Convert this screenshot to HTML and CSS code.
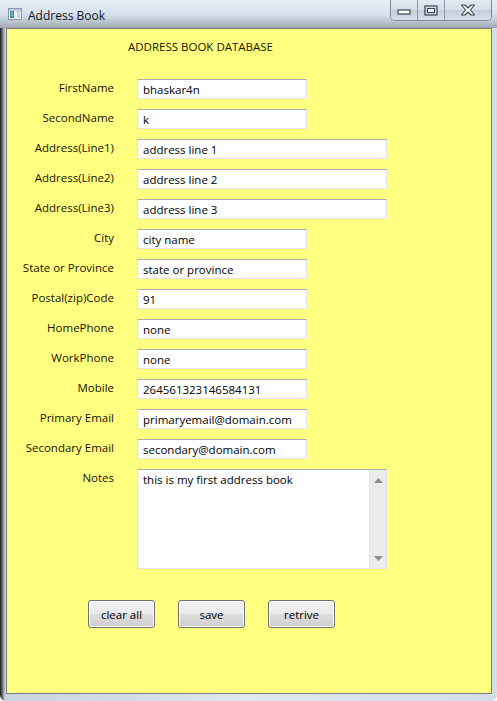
FILE: index.html
```html
<!DOCTYPE html>
<html>
<head>
<meta charset="utf-8">
<link rel="stylesheet" href="styles.css">
</head>
<body>
<div class="window">
  <div class="titlebar">
    <div class="app-icon">
      <svg width="14" height="12" viewBox="0 0 14 12">
        <rect x="0.5" y="0.5" width="13" height="11" fill="#eef2f6" stroke="#8a97a6"/>
        <rect x="1" y="1" width="12" height="2" fill="#b9c9dc"/>
        <rect x="2" y="3" width="4" height="7" fill="#3f8f8a"/>
        <rect x="3" y="4" width="2" height="4" fill="#6fb4d6"/>
        <rect x="9" y="3" width="3" height="7" fill="#c7d3df"/>
      </svg>
    </div>
    <div class="title">Address Book</div>
    <div class="controls">
      <div class="ctl min">
        <svg width="14" height="6" viewBox="0 0 14 6"><rect x="1" y="1" width="12" height="4" fill="#fff" stroke="#3b4352" stroke-width="1.2"/></svg>
      </div>
      <div class="ctl max">
        <svg width="14" height="11" viewBox="0 0 14 11"><rect x="1" y="1" width="12" height="9" fill="none" stroke="#3b4352" stroke-width="1.2"/><rect x="3.5" y="3.5" width="7" height="4" fill="#fff" stroke="#3b4352" stroke-width="1"/></svg>
      </div>
      <div class="ctl close">
        <svg width="16" height="12" viewBox="0 0 16 12"><path d="M1.5 1 H5 L8 4 L11 1 H14.5 L10.5 6 L14.5 11 H11 L8 8 L5 11 H1.5 L5.5 6 Z" fill="#fff" stroke="#3b4352" stroke-width="1.1" stroke-linejoin="round"/></svg>
      </div>
    </div>
  </div>
  <div class="content">
    <div class="heading">ADDRESS BOOK DATABASE</div>
    <div class="form">
      <div class="label">FirstName</div><input class="field short" value="bhaskar4n" readonly>
      <div class="label">SecondName</div><input class="field short" value="k" readonly>
      <div class="label">Address(Line1)</div><input class="field long" value="address line 1" readonly>
      <div class="label">Address(Line2)</div><input class="field long" value="address line 2" readonly>
      <div class="label">Address(Line3)</div><input class="field long" value="address line 3" readonly>
      <div class="label">City</div><input class="field short" value="city name" readonly>
      <div class="label">State or Province</div><input class="field short" value="state or province" readonly>
      <div class="label">Postal(zip)Code</div><input class="field short" value="91" readonly>
      <div class="label">HomePhone</div><input class="field short" value="none" readonly>
      <div class="label">WorkPhone</div><input class="field short" value="none" readonly>
      <div class="label">Mobile</div><input class="field short" value="264561323146584131" readonly>
      <div class="label">Primary Email</div><input class="field short" value="primaryemail@domain.com" readonly>
      <div class="label">Secondary Email</div><input class="field short" value="secondary@domain.com" readonly>
      <div class="label">Notes</div>
      <div class="notes">
        <div class="notes-text">this is my first address book</div>
        <div class="scrollbar">
          <svg width="9" height="5" viewBox="0 0 9 5"><path d="M4.5 0 L9 5 H0 Z" fill="#8e8e8e"/></svg>
          <svg width="9" height="5" viewBox="0 0 9 5"><path d="M0 0 H9 L4.5 5 Z" fill="#8e8e8e"/></svg>
        </div>
      </div>
    </div>
    <div class="buttons">
      <div class="btn">clear all</div>
      <div class="btn">save</div>
      <div class="btn">retrive</div>
    </div>
  </div>
</div>
</body>
</html>
```

FILE: styles.css
```css
html, body {
  margin: 0;
  padding: 0;
  background: #ffffff;
}
body {
  font-family: "Open Sans", "Noto Sans", sans-serif;
  font-size: 11.5px;
  color: #1a1208;
}
.window {
  width: 497px;
  height: 701px;
  box-sizing: border-box;
  background: linear-gradient(90deg, #1c1c1c 0px, #5a5e63 2px, #c9d3de 5px, #dfe7f0 50%, #d3dde8 100%);
  border-radius: 0 0 6px 6px;
  padding: 0 5px 7px 6px;
  display: flex;
  flex-direction: column;
  position: relative;
}
.titlebar {
  height: 28px;
  display: flex;
  align-items: flex-start;
  margin: 0 -5px 0 -6px;
  padding: 0 5px 0 8px;
  background: linear-gradient(180deg, #e6edf5 0px, #d7e2ee 14px, #b9c3ce 22px, #9ea7b1 28px);
}
.app-icon {
  margin-top: 8px;
  width: 14px;
  height: 12px;
}
.title {
  margin-left: 6px;
  margin-top: 7px;
  font-family: "Open Sans", sans-serif;
  font-size: 12px;
  color: #101820;
}
.controls {
  margin-left: auto;
  display: flex;
  height: 20px;
  border: 1px solid #7c8797;
  border-top: none;
  border-radius: 0 0 5px 5px;
  overflow: hidden;
  box-shadow: inset 0 0 0 1px rgba(255,255,255,0.6);
}
.ctl {
  height: 20px;
  display: flex;
  align-items: center;
  justify-content: center;
  background: linear-gradient(180deg, #e4ebf3 0%, #d2dbe6 50%, #c4cfdb 51%, #d6e0ea 100%);
}
.ctl.min { width: 26px; align-items: flex-end; box-sizing: border-box; height: 20px; padding-bottom: 5px; }
.ctl.max { width: 26px; border-left: 1px solid #8b96a6; }
.ctl.close { width: 46px; border-left: 1px solid #8b96a6; }
.content {
  flex: 1;
  margin-top: 0;
  background: #ffff80;
  border: 1px solid #7b7b7b;
  display: flex;
  flex-direction: column;
}
.heading {
  margin-top: 10px;
  padding-left: 121px;
  line-height: 16px;
  font-size: 11.5px;
}
.form {
  margin-top: 24px;
  display: grid;
  grid-template-columns: 107px 250px;
  column-gap: 23px;
  row-gap: 10px;
}
.label {
  text-align: right;
  line-height: 15px;
  margin-top: 1px;
  white-space: nowrap;
}
.field {
  font: inherit;
  color: #000;
  height: 20px;
  box-sizing: border-box;
  margin: 0;
  padding: 0 0 0 5px;
  border: 1px solid #e2e3ea;
  border-top-color: #abadb3;
  background: #fff;
  outline: none;
}
.field.short { width: 170px; }
.field.long { width: 250px; }
.notes {
  width: 250px;
  height: 100px;
  box-sizing: border-box;
  border: 1px solid #e2e3ea;
  border-top-color: #abadb3;
  background: #fff;
  display: flex;
}
.notes-text {
  flex: 1;
  padding: 2px 0 0 5px;
  color: #000;
  line-height: 16px;
}
.scrollbar {
  width: 17px;
  background: #ececec;
  border-left: 1px solid #e4e4e4;
  display: flex;
  flex-direction: column;
  justify-content: space-between;
  align-items: center;
  padding: 8px 0 7px;
  box-sizing: border-box;
}
.buttons {
  margin-top: 31px;
  padding-left: 81px;
  display: flex;
  gap: 23px;
}
.btn {
  width: 67px;
  height: 28px;
  box-sizing: border-box;
  border: 1px solid #707070;
  border-radius: 3px;
  background: linear-gradient(180deg, #f2f2f2 0%, #ebebeb 50%, #dddddd 51%, #cfcfcf 100%);
  box-shadow: inset 0 0 0 1px #fcfcfc;
  display: flex;
  align-items: center;
  justify-content: center;
  color: #000;
}
```
